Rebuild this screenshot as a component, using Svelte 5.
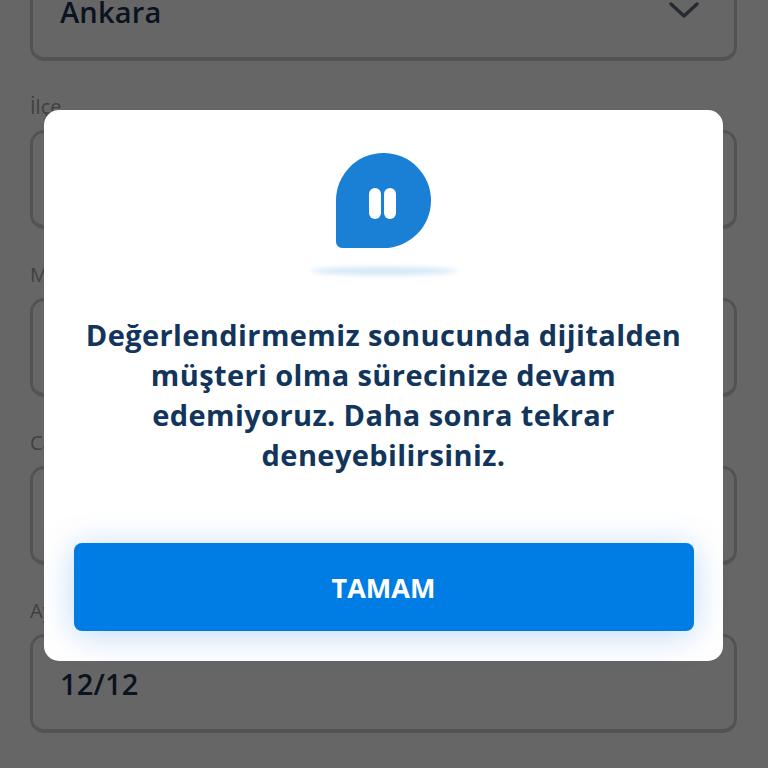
<script>
  const fields = [
    { label: 'İl', value: 'Ankara', select: true },
    { label: 'İlçe', value: '' },
    { label: 'Mahalle', value: '' },
    { label: 'Cadde', value: '' },
    { label: 'Ay/Yıl', value: '12/12' },
    { label: 'Bulunduğu İl', value: '' }
  ];
</script>

<div class="page">
  <form class="form">
    {#each fields as field}
      <div class="field">
        <span class="label">{field.label}</span>
        <div class="box">
          <span>{field.value}</span>
          {#if field.select}
            <svg class="chevron" width="30" height="16" viewBox="0 0 30 16" fill="none">
              <path d="M2 2l13 12L28 2" stroke="currentColor" stroke-width="3.4" stroke-linecap="round" stroke-linejoin="round" />
            </svg>
          {/if}
        </div>
      </div>
    {/each}
  </form>

  <div class="backdrop">
    <div class="modal">
      <div class="bubble">
        <i></i>
        <i></i>
      </div>
      <div class="bubble-shadow"></div>
      <p>Değerlendirmemiz sonucunda dijitalden müşteri olma sürecinize devam edemiyoruz. Daha sonra tekrar deneyebilirsiniz.</p>
      <button type="button">TAMAM</button>
    </div>
  </div>
</div>

<style>
  :global(body) {
    margin: 0;
    font-family: "Open Sans", "Noto Sans", sans-serif;
  }

  .page {
    position: relative;
    width: 768px;
    height: 768px;
    overflow: hidden;
    background: #fff;
  }

  .form {
    display: flex;
    flex-direction: column;
    gap: 32px;
    margin-top: -75px;
    padding: 0 31px 0 30px;
  }

  .label {
    display: block;
    height: 37px;
    font-size: 20px;
    line-height: 28px;
    color: #a0a0a0;
  }

  .box {
    box-sizing: border-box;
    height: 99px;
    display: flex;
    align-items: center;
    justify-content: space-between;
    padding: 0 35px 0 27px;
    border: 3px solid #d0d0d0;
    border-bottom-width: 4px;
    border-radius: 14px;
    font-size: 29px;
    font-weight: 550;
    letter-spacing: 0.2px;
    color: #1a3150;
  }

  .chevron {
    color: #5f6a7a;
    margin-bottom: 2px;
  }

  .backdrop {
    position: absolute;
    inset: 0;
    background: rgba(0, 0, 0, 0.6);
  }

  .modal {
    position: absolute;
    left: 44px;
    top: 110px;
    box-sizing: border-box;
    width: 679px;
    height: 551px;
    padding: 43px 30px 30px;
    display: flex;
    flex-direction: column;
    align-items: center;
    background: #fff;
    border-radius: 15px;
  }

  .bubble {
    box-sizing: border-box;
    width: 95px;
    height: 95px;
    flex: none;
    padding: 5px 2px 0 0;
    display: flex;
    align-items: center;
    justify-content: center;
    gap: 3px;
    background: #1a80d6;
    border-radius: 50% 50% 50% 6px;
  }

  .bubble i {
    width: 12px;
    height: 31px;
    background: #fff;
    border-radius: 6px;
  }

  .bubble-shadow {
    width: 146px;
    height: 8px;
    margin-top: 19px;
    background: #d4e6f7;
    border-radius: 50%;
    filter: blur(2.5px);
  }

  p {
    width: 620px;
    margin: 40px 0 0;
    font-size: 29px;
    line-height: 40px;
    font-weight: 700;
    letter-spacing: 0.4px;
    text-align: center;
    color: #12355b;
  }

  button {
    width: 620px;
    height: 88px;
    margin-top: auto;
    flex: none;
    border: 0;
    border-radius: 8px;
    background: #007de4;
    box-shadow: 0 4px 34px rgba(0, 110, 215, 0.26);
    color: #fff;
    font: 700 27px "Open Sans", "Noto Sans", sans-serif;
  }
</style>
